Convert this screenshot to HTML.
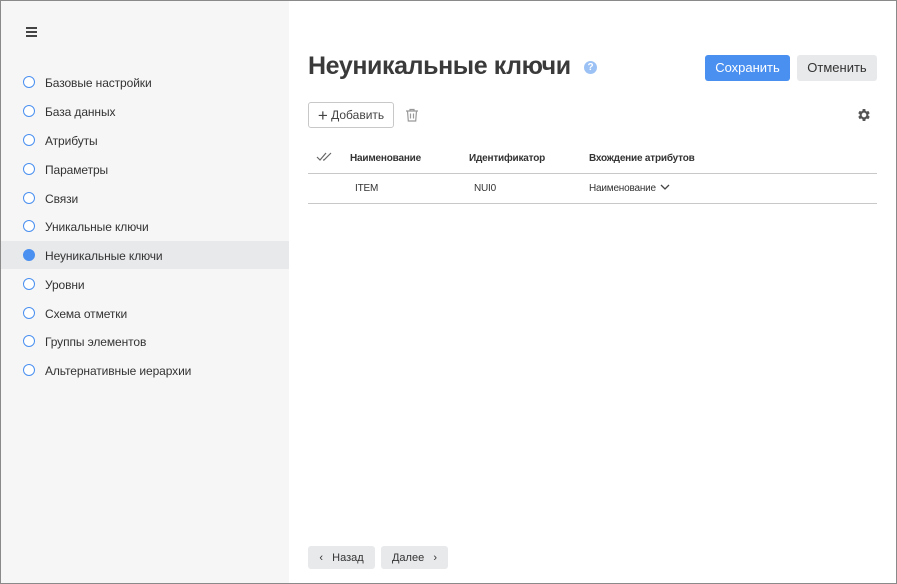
<!DOCTYPE html><html><head><meta charset="utf-8"><style>
*{box-sizing:border-box;margin:0;padding:0}
body{width:897px;height:584px;font-family:"Liberation Sans",sans-serif;background:#fff;position:relative;overflow:hidden;color:#333}
.frame{position:absolute;left:0;top:0;width:897px;height:584px;border:1px solid #8a8a8a}
.side{position:absolute;left:1px;top:1px;width:288px;height:582px;background:#f6f6f6}
.ham{position:absolute;left:25px;top:26px;width:11px}
.ham i{display:block;height:2px;background:#444;margin-bottom:2px}
.item{position:absolute;left:0;width:288px;height:28px;font-size:12px;color:#333;line-height:30px;padding-left:44px;letter-spacing:-0.1px}
.item .c{position:absolute;left:22px;top:8px;width:12px;height:12px;border:1.3px solid #4a90f0;border-radius:50%;background:#fff}
.item.sel{background:#e8e9eb}
.item.sel .c{background:#4a90f0}
.abs{position:absolute}
h1{position:absolute;left:308px;top:52px;font-size:25px;font-weight:bold;color:#3a3a3a;letter-spacing:-0.4px}
.q{position:absolute;left:584px;top:61px;width:13px;height:13px;border-radius:50%;background:#9cc2f5;color:#fff;font-size:10px;font-weight:bold;text-align:center;line-height:13px}
.btn{position:absolute;height:26px;border-radius:3px;font-size:13px;line-height:26px;text-align:center}
.th{position:absolute;top:153px;font-size:10px;font-weight:bold;color:#333;letter-spacing:-0.2px}
.td{position:absolute;top:183px;font-size:10px;color:#333;letter-spacing:-0.2px}
.line{position:absolute;left:308px;width:569px;height:1px;background:#c8c8c8}
</style></head><body>
<div class="side">
<div class="ham"><i></i><i></i><i></i></div>
<div class="item" style="top:67px"><span class="c"></span>Базовые настройки</div>
<div class="item" style="top:96px"><span class="c"></span>База данных</div>
<div class="item" style="top:125px"><span class="c"></span>Атрибуты</div>
<div class="item" style="top:154px"><span class="c"></span>Параметры</div>
<div class="item" style="top:183px"><span class="c"></span>Связи</div>
<div class="item" style="top:211px"><span class="c"></span>Уникальные ключи</div>
<div class="item sel" style="top:240px"><span class="c"></span>Неуникальные ключи</div>
<div class="item" style="top:269px"><span class="c"></span>Уровни</div>
<div class="item" style="top:298px"><span class="c"></span>Схема отметки</div>
<div class="item" style="top:326px"><span class="c"></span>Группы элементов</div>
<div class="item" style="top:355px"><span class="c"></span>Альтернативные иерархии</div>
</div>
<div class="frame"></div>
<h1>Неуникальные ключи</h1>
<div class="q">?</div>
<div class="btn" style="left:705px;top:55px;width:85px;background:#4a90f0;color:#fff">Сохранить</div>
<div class="btn" style="left:797px;top:55px;width:80px;background:#e8e9eb;color:#333">Отменить</div>
<div class="btn" style="left:308px;top:102px;width:86px;border:1px solid #c8c8c8;font-size:12px;line-height:24px;color:#444;background:#fff"><span style="font-size:17px;vertical-align:-2px">+</span> Добавить</div>
<svg class="abs" style="left:405px;top:108px" width="14" height="14" viewBox="0 0 14 14" fill="none" stroke="#999" stroke-width="1.2"><path d="M1 3h12M5 3V1.5h4V3M2.5 3l.8 10h7.4l.8-10M5.5 5.5v5M8.5 5.5v5"/></svg>
<svg class="abs" style="left:856px;top:107px" width="16" height="16" viewBox="0 0 24 24"><path fill="#555" d="M19.4 13a7.5 7.5 0 000-2l2.1-1.6-2-3.5-2.5 1a7.3 7.3 0 00-1.7-1L15 3h-4l-.4 2.8a7.3 7.3 0 00-1.7 1l-2.5-1-2 3.5L6.6 11a7.5 7.5 0 000 2l-2.2 1.6 2 3.5 2.5-1c.5.4 1.1.8 1.700 1L11 21h4l.4-2.8c.6-.3 1.2-.6 1.7-1l2.5 1 2-3.5zM13 15.5a3.5 3.5 0 110-7 3.5 3.5 0 010 7z" transform="translate(-1 0)"/></svg>
<svg class="abs" style="left:316px;top:152px" width="18" height="10" viewBox="0 0 18 10" fill="none" stroke="#666" stroke-width="1.2"><path d="M1 5l3 3 6-7M7 8l1 0 7-7"/></svg>
<div class="th" style="left:350px">Наименование</div>
<div class="th" style="left:469px">Идентификатор</div>
<div class="th" style="left:589px">Вхождение атрибутов</div>
<div class="line" style="top:173px"></div>
<div class="td" style="left:355px">ITEM</div>
<div class="td" style="left:474px">NUI0</div>
<div class="td" style="left:589px">Наименование</div>
<svg class="abs" style="left:660px;top:184px" width="10" height="7" viewBox="0 0 10 7" fill="none" stroke="#444" stroke-width="1.3"><path d="M1 1l4 4 4-4"/></svg>
<div class="line" style="top:203px"></div>
<div class="btn" style="left:308px;top:546px;width:67px;height:23px;line-height:25px;background:#e8e9eb;font-size:11px;color:#333">‹&nbsp;&nbsp; Назад</div>
<div class="btn" style="left:381px;top:546px;width:67px;height:23px;line-height:25px;background:#e8e9eb;font-size:11px;color:#333">Далее &nbsp;&nbsp;›</div>
</body></html>
